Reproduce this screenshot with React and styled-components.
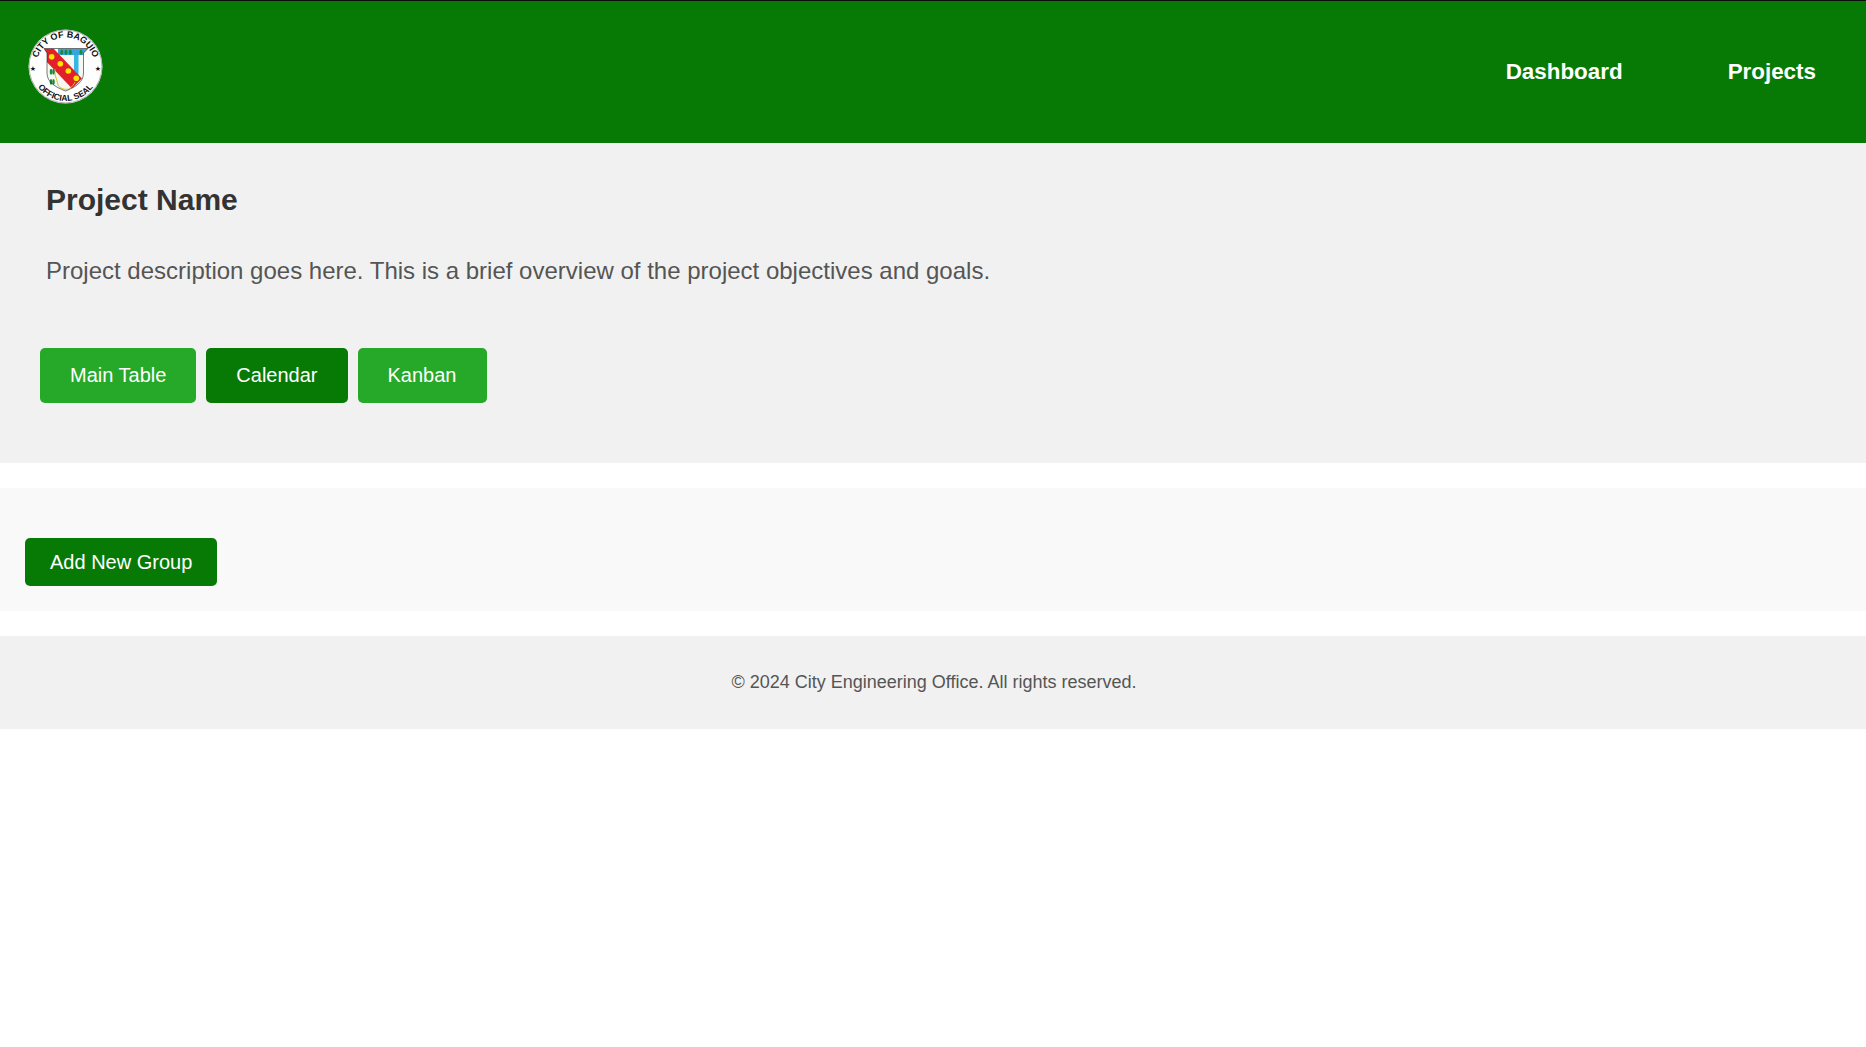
import styled, { createGlobalStyle } from "styled-components";

const GlobalStyle = createGlobalStyle`
  html, body {
    margin: 0;
    padding: 0;
    background: #ffffff;
    font-family: "Liberation Sans", Arial, sans-serif;
  }
`;

const Header = styled.header`
  height: 143px;
  box-sizing: border-box;
  border-top: 1px solid #0a0f0a;
  background-color: #077a06;
  display: flex;
  align-items: center;
  justify-content: space-between;
  padding: 0 50px 0 28px;
`;

const Logo = styled.svg`
  width: 76px;
  height: 76px;
  display: block;
  margin-top: -10px;
`;

const Nav = styled.nav`
  display: flex;
  gap: 105px;
  margin-top: -1px;
  a {
    color: #ffffff;
    font-size: 22.4px;
    font-weight: 700;
    text-decoration: none;
  }
`;

const ProjectInfo = styled.section`
  height: 320px;
  box-sizing: border-box;
  background-color: #f1f1f1;
  padding: 0 40px;
  display: flex;
  flex-direction: column;
`;

const Title = styled.h1`
  margin: 38px 0 0 6px;
  font-size: 30px;
  line-height: 37px;
  font-weight: 700;
  color: #333333;
`;

const Description = styled.p`
  margin: 39px 0 0 6px;
  font-size: 24px;
  line-height: 28px;
  color: #555555;
`;

const Tabs = styled.div`
  display: flex;
  gap: 10px;
  margin-top: 63px;
`;

const Tab = styled.button`
  height: 55px;
  padding: 0 30px;
  border: none;
  border-radius: 5px;
  font-family: inherit;
  font-size: 20px;
  color: #ffffff;
  background-color: ${(p) => (p.$active ? "#077a06" : "#26a829")};
`;

const GroupPanel = styled.section`
  height: 123px;
  box-sizing: border-box;
  margin-top: 25px;
  background-color: #f9f9f9;
  padding: 50px 25px 0;
`;

const AddButton = styled.button`
  height: 48px;
  padding: 0 25px;
  border: none;
  border-radius: 5px;
  font-family: inherit;
  font-size: 20px;
  color: #ffffff;
  background-color: #077a06;
`;

const Footer = styled.footer`
  height: 93px;
  margin-top: 25px;
  background-color: #f1f1f1;
  display: flex;
  align-items: center;
  justify-content: center;
  font-size: 18px;
  color: #555555;
  padding-left: 2px;
  box-sizing: border-box;
`;

const shieldPath = "M16 19.5 H60 L55.5 24 V44 C55.5 53 48 58 37.5 62 C27 58 19 53 19 44 V24 Z";

const Seal = () => (
  <Logo viewBox="0 0 76 76">
    <defs>
      <path id="sealTop" d="M 8.5 37.5 A 29 29 0 0 1 66.5 37.5" />
      <path id="sealBottom" d="M 3 37.5 A 34.5 34.5 0 0 0 72 37.5" />
      <clipPath id="shield">
        <path d={shieldPath} />
      </clipPath>
    </defs>
    <circle cx="37.5" cy="37.5" r="37" fill="#ffffff" />
    <circle cx="37.5" cy="37.5" r="36.4" fill="none" stroke="#666666" strokeWidth="0.5" />
    <text fontFamily="Liberation Sans" fontSize="9" fontWeight="700" fill="#111111" textAnchor="middle">
      <textPath href="#sealTop" startOffset="50%">CITY OF BAGUIO</textPath>
    </text>
    <text fontFamily="Liberation Sans" fontSize="8.5" fontWeight="700" fill="#111111" textAnchor="middle">
      <textPath href="#sealBottom" startOffset="50%">OFFICIAL SEAL</textPath>
    </text>
    <text x="5" y="41.5" fontFamily="DejaVu Sans" fontSize="7" fill="#111111" textAnchor="middle">★</text>
    <text x="70" y="41.5" fontFamily="DejaVu Sans" fontSize="7" fill="#111111" textAnchor="middle">★</text>
    <g clipPath="url(#shield)">
      <rect x="14" y="18" width="50" height="46" fill="#f6f8f2" />
      <rect x="30" y="19.5" width="30" height="6.5" fill="#35a6dd" />
      <rect x="46" y="26" width="4.5" height="21" fill="#35b8e6" />
      <path d="M16 19.5 H25.5 L54 49.5 L44 59.5 L16 30 Z" fill="#e3202a" />
      <circle cx="23.7" cy="27.7" r="2.8" fill="#ffe400" />
      <circle cx="32.3" cy="34.7" r="2.8" fill="#ffe400" />
      <circle cx="40.3" cy="42" r="2.8" fill="#ffe400" />
      <circle cx="48.3" cy="49.3" r="2.8" fill="#ffe400" />
      <path d="M27 40 C26 46 29 50 30 56 C32 60 38 61 41 60 C44 58 46 55 47 53" fill="none" stroke="#d2c31f" strokeWidth="1" />
    </g>
    <g fill="#1d8a3b">
      <ellipse cx="33.7" cy="23.3" rx="1.5" ry="2.8" />
      <ellipse cx="38" cy="23.3" rx="1.5" ry="2.8" />
      <ellipse cx="42.3" cy="23.3" rx="1.5" ry="2.8" />
      <ellipse cx="53" cy="23.3" rx="1.5" ry="2.8" />
      <ellipse cx="23" cy="42.7" rx="1.3" ry="3" />
      <ellipse cx="25.5" cy="42.7" rx="1.3" ry="3" />
      <ellipse cx="23" cy="53" rx="1.3" ry="3" />
      <ellipse cx="25.5" cy="53" rx="1.3" ry="3" />
    </g>
    <path d={shieldPath} fill="none" stroke="#222222" strokeWidth="0.6" />
  </Logo>
);

const App = () => {
  return (
    <>
      <GlobalStyle />
      <Header>
        <Seal />
        <Nav>
          <a href="#dashboard">Dashboard</a>
          <a href="#projects">Projects</a>
        </Nav>
      </Header>
      <ProjectInfo>
        <Title>Project Name</Title>
        <Description>
          Project description goes here. This is a brief overview of the project objectives and goals.
        </Description>
        <Tabs>
          <Tab>Main Table</Tab>
          <Tab $active>Calendar</Tab>
          <Tab>Kanban</Tab>
        </Tabs>
      </ProjectInfo>
      <GroupPanel>
        <AddButton>Add New Group</AddButton>
      </GroupPanel>
      <Footer>© 2024 City Engineering Office. All rights reserved.</Footer>
    </>
  );
};

export default App;
